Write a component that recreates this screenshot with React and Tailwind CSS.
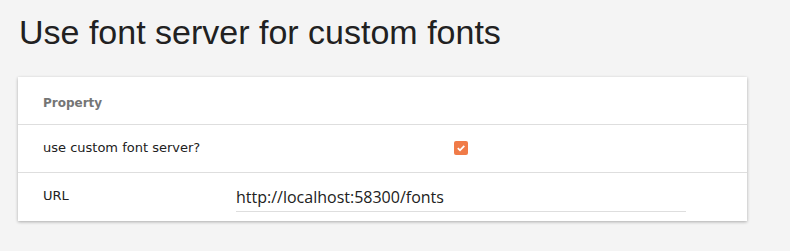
export default function App() {
  return (
    <div className="min-h-[251px] w-[790px] bg-[#f4f4f4] pt-[12px] pl-[18px]">
      <h1 className="font-['Liberation_Sans',Arial,sans-serif] text-[34px] leading-[40px] text-[#212121] pl-[1px]">
        Use font server for custom fonts
      </h1>
      <div className="mt-[25px] w-[729px] bg-white shadow-[0_1px_3px_rgba(0,0,0,0.3)] font-['DejaVu_Sans',sans-serif]">
        <div className="flex h-[48px] items-center border-b border-[#dedede] pl-[25px] pt-[4px]">
          <span className="text-[12px] font-bold text-[#757575]">Property</span>
        </div>
        <div className="flex h-[48px] items-center border-b border-[#dedede] pb-[2px]">
          <div className="w-[218px] pl-[25px] text-[13px] text-[#212121]">use custom font server?</div>
          <div className="flex w-[450px] justify-center">
            <div className="flex h-[14px] w-[14px] items-center justify-center rounded-[2px] bg-[#f07b48]">
              <svg width="10" height="10" viewBox="0 0 10 10">
                <path d="M1.8 5.2 L4 7.3 L8.3 2.8" fill="none" stroke="white" strokeWidth="1.8" />
              </svg>
            </div>
          </div>
        </div>
        <div className="flex h-[48px] items-start">
          <div className="w-[218px] pl-[25px] pt-[13px] text-[13px] text-[#212121]">URL</div>
          <div className="w-[450px] pt-[13px]">
            <div className="border-b border-[#dedede] pb-[3px] font-['Open_Sans',sans-serif] text-[16px] leading-[22px] text-[#212121]">
              http://localhost:58300/fonts
            </div>
          </div>
        </div>
      </div>
    </div>
  );
}
